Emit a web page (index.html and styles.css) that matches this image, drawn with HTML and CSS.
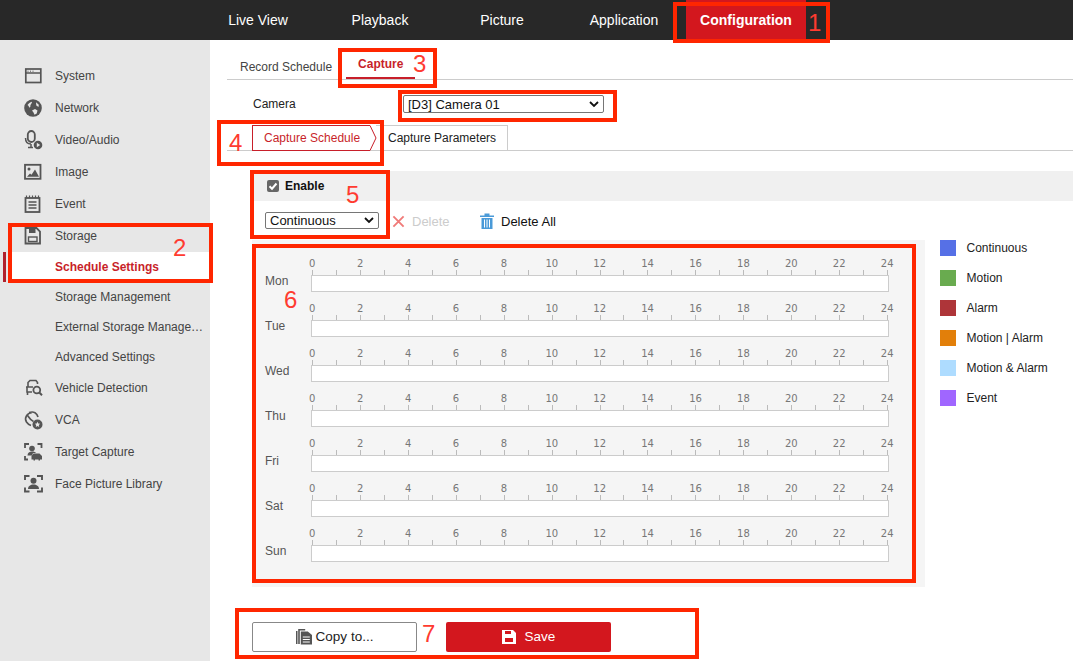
FILE: index.html
```html
<!DOCTYPE html>
<html lang="en">
<head>
    <meta charset="UTF-8">
    <title>Configuration - Storage</title>
    <link rel="stylesheet" href="styles.css">
</head>
<body>
    <header class="topbar">
        <a class="nav-item">Live View</a>
        <a class="nav-item">Playback</a>
        <a class="nav-item">Picture</a>
        <a class="nav-item">Application</a>
        <a class="nav-item active">Configuration</a>
    </header>

    <div class="page">
        <nav class="sidebar">
            <div class="side-item">
                <svg class="icon" viewBox="0 0 18 18"><rect x="1.800" y="2" width="15" height="13.500" stroke-width="1.700"/><path d="M1.500 6h15" stroke-width="1.500"/><path d="M3.500 4.200h1M6 4.200h1M8.500 4.200h1" stroke-width="1"/></svg>
                <span>System</span>
            </div>
            <div class="side-item">
                <svg class="icon" viewBox="0 0 18 18"><circle class="solid" cx="9" cy="9" r="8.800"/><path class="hole" d="M3.500 6c1-1.500 2.500-2.800 4.500-3.300 0 1.600-1 2.300-1.500 3.300-.5 1 .5 2-1 2.700-.5-1-1-2.100-2-2.700zM8 11.500l3-1.500 2.500 1.500-.8 3-2.200 1.300-1-2.300zM12 3.300l2.800 2.500-.3 2.200-2.200-1.500z"/></svg>
                <span>Network</span>
            </div>
            <div class="side-item">
                <svg class="icon" viewBox="0 0 18 18"><rect x="3.800" y="0" width="7" height="11" rx="3.500" stroke-width="1.800"/><path d="M1.500 7c0 4 2.500 6 5.500 6M7 13v3M4 16.500h5" stroke-width="1.500"/><circle class="solid" cx="14" cy="14" r="4.300"/><path class="hole" d="M12.800 11.800v4.400l3.400-2.200z"/></svg>
                <span>Video/Audio</span>
            </div>
            <div class="side-item">
                <svg class="icon" viewBox="0 0 18 18"><rect x="1" y="1.800" width="15.500" height="14" stroke-width="1.800"/><circle class="solid" cx="5" cy="6" r="1.500"/><path class="solid" d="M3 13.800l3-3.300 1.500 1.200L11 6.500l4 7.300z"/></svg>
                <span>Image</span>
            </div>
            <div class="side-item">
                <svg class="icon" viewBox="0 0 18 18"><rect x="1.500" y="3" width="14" height="14" stroke-width="1.800"/><path d="M2.500 .5v2.500M5.500 .5v2.500M8.500 .5v2.500M11.500 .5v2.500M14.500 .5v2.500" stroke-width="1.200"/><path d="M4.500 7h8M4.500 10h8M4.500 13h8" stroke-width="1.300"/></svg>
                <span>Event</span>
            </div>
            <div class="side-item">
                <svg class="icon" viewBox="0 0 18 18"><path d="M1.500 1h11l3.500 3.500V16.500H1.500z" stroke-width="1.800"/><path class="solid" d="M5 1h6.500v5H5z"/><rect x="4.500" y="10" width="8.500" height="4.500" stroke-width="1.400"/></svg>
                <span>Storage</span>
            </div>
            <div class="side-sub selected">Schedule Settings</div>
            <div class="side-sub">Storage Management</div>
            <div class="side-sub">External Storage Manage…</div>
            <div class="side-sub">Advanced Settings</div>
            <div class="side-item">
                <svg class="icon" viewBox="0 0 18 18"><path d="M4 8V3.500L6 1.500h6l1.500 2V5M2 8h7M3 8v5h5M3.500 13v3" stroke-width="1.600"/><circle cx="12.800" cy="11" r="3.400" stroke-width="1.800"/><path d="M15.300 13.500l2.700 2.700" stroke-width="2"/></svg>
                <span>Vehicle Detection</span>
            </div>
            <div class="side-item">
                <svg class="icon" viewBox="0 0 18 18"><path d="M8 1.500C3 2 0 7 2.500 11c1 1.500 2.500 2.800 4.500 3.500M5 1.500c5-1.500 8 .5 9 4.500M3.500 4.500c2 3 4 5 6 6" stroke-width="1.700"/><circle class="solid" cx="13.500" cy="13.500" r="5"/><path class="hole" d="M13.500 10.800l.8 1.800 1.900.2-1.400 1.300.4 1.900-1.700-1-1.700 1 .4-1.900-1.400-1.300 1.900-.2z"/></svg>
                <span>VCA</span>
            </div>
            <div class="side-item">
                <svg class="icon" viewBox="0 0 18 18"><path d="M1 5V1h4M13.500 1H17.500V5M1 13v3.500h3" stroke-width="1.800"/><circle class="solid" cx="8" cy="5.500" r="2.800"/><path class="solid" d="M3.500 12.500c0-2.500 2-4 4.500-4s3 .5 4 1.500H9l-1 2.500z"/><path class="solid" d="M7.500 16.500v-3.500L9.500 10.500h6L18 13v3.500h-2v1h-1.500v-1H11v1H9.500v-1z"/></svg>
                <span>Target Capture</span>
            </div>
            <div class="side-item">
                <svg class="icon" viewBox="0 0 18 18"><path d="M1 5V1h4.500M13 1h5V5M1 12.500V16.500h4.500M13 16.500h5V12.500" stroke-width="1.900"/><circle class="solid" cx="9.500" cy="5.800" r="3"/><path class="solid" d="M4 14c0-3 2.500-4.500 5.500-4.500S15 11 15 14z"/></svg>
                <span>Face Picture Library</span>
            </div>
        </nav>

        <main class="content">
            <div class="tabs">
                <a class="tab">Record Schedule</a>
                <a class="tab current">Capture</a>
            </div>

            <div class="camera-row">
                <label class="camera-label">Camera</label>
                <select class="select camera-select"><option>[D3] Camera 01</option></select>
            </div>

            <div class="subtabs">
                <a class="subtab current">Capture Schedule
                    <svg class="subtab-arrow" viewBox="0 0 8 26"><path d="M0 .5h1L7 13 1 25.500H0"/></svg>
                </a>
                <a class="subtab">Capture Parameters</a>
            </div>

            <div class="enable-band">
                <span class="checkbox">
                    <svg viewBox="0 0 12 12"><path d="M2.500 6.200l2.500 2.500 4.500-5.200"/></svg>
                </span>
                <b>Enable</b>
            </div>

            <div class="toolbar">
                <select class="select type-select"><option>Continuous</option></select>
                <a class="tool disabled">
                    <svg class="tool-x" viewBox="0 0 14 14"><path d="M1.500 1.500l11 11M12.500 1.500l-11 11"/></svg>
                    Delete
                </a>
                <a class="tool">
                    <svg class="tool-bin" viewBox="0 0 14 16"><path class="lid" d="M0 2.500h14v1.500H0zM4.500.5h5v2h-5z"/><path class="lid" d="M1.500 5h11v11h-11z"/><path class="slots" d="M4.500 6.500v8M7 6.500v8M9.500 6.500v8"/></svg>
                    Delete All
                </a>
            </div>

            <div class="schedule-wrap">
                <div class="schedule">
                    <div class="day">
                        <span class="day-name">Mon</span>
                        <div class="timeline">
                            <div class="hours"><span>0</span><span>2</span><span>4</span><span>6</span><span>8</span><span>10</span><span>12</span><span>14</span><span>16</span><span>18</span><span>20</span><span>22</span><span>24</span></div>
                            <div class="ticks"></div>
                            <div class="bar"></div>
                        </div>
                    </div>
                    <div class="day">
                        <span class="day-name">Tue</span>
                        <div class="timeline">
                            <div class="hours"><span>0</span><span>2</span><span>4</span><span>6</span><span>8</span><span>10</span><span>12</span><span>14</span><span>16</span><span>18</span><span>20</span><span>22</span><span>24</span></div>
                            <div class="ticks"></div>
                            <div class="bar"></div>
                        </div>
                    </div>
                    <div class="day">
                        <span class="day-name">Wed</span>
                        <div class="timeline">
                            <div class="hours"><span>0</span><span>2</span><span>4</span><span>6</span><span>8</span><span>10</span><span>12</span><span>14</span><span>16</span><span>18</span><span>20</span><span>22</span><span>24</span></div>
                            <div class="ticks"></div>
                            <div class="bar"></div>
                        </div>
                    </div>
                    <div class="day">
                        <span class="day-name">Thu</span>
                        <div class="timeline">
                            <div class="hours"><span>0</span><span>2</span><span>4</span><span>6</span><span>8</span><span>10</span><span>12</span><span>14</span><span>16</span><span>18</span><span>20</span><span>22</span><span>24</span></div>
                            <div class="ticks"></div>
                            <div class="bar"></div>
                        </div>
                    </div>
                    <div class="day">
                        <span class="day-name">Fri</span>
                        <div class="timeline">
                            <div class="hours"><span>0</span><span>2</span><span>4</span><span>6</span><span>8</span><span>10</span><span>12</span><span>14</span><span>16</span><span>18</span><span>20</span><span>22</span><span>24</span></div>
                            <div class="ticks"></div>
                            <div class="bar"></div>
                        </div>
                    </div>
                    <div class="day">
                        <span class="day-name">Sat</span>
                        <div class="timeline">
                            <div class="hours"><span>0</span><span>2</span><span>4</span><span>6</span><span>8</span><span>10</span><span>12</span><span>14</span><span>16</span><span>18</span><span>20</span><span>22</span><span>24</span></div>
                            <div class="ticks"></div>
                            <div class="bar"></div>
                        </div>
                    </div>
                    <div class="day">
                        <span class="day-name">Sun</span>
                        <div class="timeline">
                            <div class="hours"><span>0</span><span>2</span><span>4</span><span>6</span><span>8</span><span>10</span><span>12</span><span>14</span><span>16</span><span>18</span><span>20</span><span>22</span><span>24</span></div>
                            <div class="ticks"></div>
                            <div class="bar"></div>
                        </div>
                    </div>
                </div>

                <ul class="legend">
                    <li><i class="swatch continuous"></i>Continuous</li>
                    <li><i class="swatch motion"></i>Motion</li>
                    <li><i class="swatch alarm"></i>Alarm</li>
                    <li><i class="swatch motion-or"></i>Motion | Alarm</li>
                    <li><i class="swatch motion-and"></i>Motion &amp; Alarm</li>
                    <li><i class="swatch event"></i>Event</li>
                </ul>
            </div>

            <div class="actions">
                <button class="btn copy">
                    <svg class="btn-icon" viewBox="0 0 16 16"><path class="copy-back" d="M0 2h1.500v13H0zM2.200 1h1.600v14H2.200zM2.200 0h7v1.500h-7z"/><path class="copy-back" d="M4.800 2.500h7l4.200 3.500v9.500H4.800z"/><path class="copy-lines" d="M6.800 8h7M6.800 10.500h7M6.800 13h7"/></svg>
                    Copy to...
                </button>
                <button class="btn save">
                    <svg class="btn-icon" viewBox="0 0 14 14"><path class="save-body" d="M0 0h11l3 3v11H0z"/><path class="save-hole" d="M3 1h6v3H3zM3 8h8v4H3z"/></svg>
                    Save
                </button>
            </div>
        </main>
    </div>

    <!-- red review marks drawn over the screenshot -->
    <div class="mark mark-config"></div><span class="mark-num num-1">1</span>
    <div class="mark mark-storage"></div><span class="mark-num num-2">2</span>
    <div class="mark mark-capture"></div><span class="mark-num num-3">3</span>
    <div class="mark mark-camera"></div>
    <div class="mark mark-subtab"></div><span class="mark-num num-4">4</span>
    <div class="mark mark-enable"></div><span class="mark-num num-5">5</span>
    <div class="mark mark-grid"></div><span class="mark-num num-6">6</span>
    <div class="mark mark-actions"></div><span class="mark-num num-7">7</span>
</body>
</html>
```

FILE: styles.css
```css
* {
    margin: 0;
    padding: 0;
    box-sizing: border-box;
}

body {
    position: relative;
    height: 661px;
    overflow: hidden;
    background: #fff;
    font-family: "Liberation Sans", Arial, sans-serif;
    font-size: 12px;
    color: #222;
}

/* top navigation */
.topbar {
    display: flex;
    gap: 2px;
    height: 40px;
    padding-left: 198px;
    background: #282828;
}

.nav-item {
    width: 120px;
    line-height: 40px;
    text-align: center;
    font-size: 14px;
    color: #fff;
}

.nav-item.active {
    background: #d3171e;
    font-weight: bold;
}

.page {
    display: flex;
    height: 621px;
}

/* left menu */
.sidebar {
    flex: 0 0 210px;
    padding-top: 20px;
    background: #e7e7e7;
    color: #444;
}

.side-item {
    display: flex;
    align-items: center;
    height: 32px;
    padding-left: 24px;
    gap: 13px;
}

.icon {
    flex: 0 0 18px;
    width: 18px;
    height: 18px;
    overflow: visible;
    fill: none;
    stroke: #555;
    stroke-width: 1.6;
}

.icon .solid {
    fill: #555;
    stroke: none;
}

.icon .hole {
    fill: #e7e7e7;
    stroke: none;
}

.side-sub {
    height: 30px;
    padding-left: 55px;
    line-height: 30px;
}

.side-sub.selected {
    position: relative;
    margin-left: 10px;
    padding-left: 45px;
    background: #fff;
    color: #c81f2a;
    font-weight: bold;
}

.side-sub.selected::before {
    content: '';
    position: absolute;
    left: -7px;
    top: 0;
    width: 3px;
    height: 30px;
    background: #b0202c;
}

/* main area */
.content {
    flex: 1;
    padding-left: 17px;
}

.tabs {
    display: flex;
    align-items: flex-end;
    height: 40px;
    border-bottom: 1px solid #ccc;
}

.tab {
    padding: 0 9px 5px 13px;
    line-height: 14px;
    color: #444;
}

.tab.current {
    width: 69px;
    margin-left: 5px;
    padding: 0 0 6px 12px;
    border-bottom: 2px solid #c81f2a;
    color: #c81f2a;
    font-weight: bold;
}

.camera-row {
    display: flex;
    align-items: center;
    height: 18px;
    margin: 15px 0 12px 26px;
}

.camera-label {
    width: 150px;
}

.select {
    height: 18px;
    padding-left: 4px;
    border: 1px solid #767676;
    border-radius: 2px;
    background: #fff url("data:image/svg+xml,%3Csvg xmlns='http://www.w3.org/2000/svg' width='10' height='7'%3E%3Cpath d='M1 1l4 4 4-4' fill='none' stroke='%23111' stroke-width='1.800'/%3E%3C/svg%3E") no-repeat right 4px center;
    appearance: none;
    font-family: "Liberation Sans", Arial, sans-serif;
    font-size: 13px;
    color: #111;
}

.camera-select {
    width: 201px;
}

.subtabs {
    display: flex;
    height: 26px;
    padding-left: 25px;
    border-bottom: 1px solid #ccc;
}

.subtab {
    position: relative;
    height: 26px;
    padding: 0 11px 0 12px;
    border: 1px solid #ccc;
    border-left: none;
    line-height: 24px;
}

.subtab.current {
    width: 117px;
    height: 26px;
    padding: 0 0 0 11px;
    border: 1px solid #c81f2a;
    border-right: none;
    margin-right: 7px;
    background: #fff;
    color: #c81f2a;
}

.subtab-arrow {
    position: absolute;
    left: 116px;
    top: -1px;
    width: 8px;
    height: 26px;
    fill: #fff;
    stroke: #c81f2a;
    stroke-width: 1;
}

.enable-band {
    display: flex;
    align-items: center;
    gap: 6px;
    height: 30px;
    margin: 20px 0 0 25px;
    padding-left: 15px;
    background: #f0f0f0;
    color: #111;
}

.checkbox {
    width: 12px;
    height: 12px;
    border-radius: 2px;
    background: #666;
}

.checkbox svg {
    display: block;
    fill: none;
    stroke: #fff;
    stroke-width: 2;
}

.toolbar {
    display: flex;
    align-items: center;
    height: 18px;
    margin: 11px 0 10px 38px;
}

.type-select {
    align-self: flex-start;
    width: 114px;
    height: 17px;
}

.tool {
    display: flex;
    align-items: center;
    gap: 7px;
    margin-left: 13px;
    width: 88px;
    font-size: 13px;
    color: #111;
}

.tool.disabled {
    width: 75px;
    color: #ccc;
}

.tool-x {
    width: 13px;
    height: 13px;
    fill: none;
    stroke: #f07a78;
    stroke-width: 2;
}

.tool-bin {
    width: 14px;
    height: 16px;
}

.tool-bin .lid {
    fill: #4a9ad8;
}

.tool-bin .slots {
    fill: none;
    stroke: #fff;
    stroke-width: 1;
}

/* weekly schedule */
.schedule-wrap {
    display: flex;
    margin-left: 25px;
}

.schedule {
    flex: 0 0 673px;
    height: 347px;
    padding: 15px 0 0 13px;
    background: #f5f5f5;
}

.day {
    display: flex;
    height: 45px;
}

.day-name {
    flex: 0 0 46px;
    margin-top: 18px;
    line-height: 16px;
    color: #555;
}

.timeline {
    width: 578px;
}

.hours {
    display: flex;
    height: 15px;
    margin-left: -22.7px;
    font-family: "DejaVu Sans", sans-serif;
    font-size: 10px;
    line-height: 17px;
    color: #777;
}

.hours span {
    flex: 0 0 47.92px;
    text-align: center;
}

.ticks {
    width: 578px;
    height: 5px;
    margin-left: 1px;
    background: repeating-linear-gradient(to right, #bbb 0, #bbb 1px, transparent 1px, transparent 23.96px);
}

.bar {
    height: 17px;
    border: 1px solid #ccc;
    background: #fff;
}

.legend {
    margin-left: 15px;
    list-style: none;
    color: #222;
}

.legend li {
    display: flex;
    align-items: center;
    gap: 10.5px;
    height: 16px;
    margin-bottom: 14px;
}

.swatch {
    width: 16px;
    height: 16px;
}

.continuous { background: #5670e6; }
.motion { background: #69ab4f; }
.alarm { background: #ae3539; }
.motion-or { background: #e27f0a; }
.motion-and { background: #aedcff; }
.event { background: #a066ff; }

/* bottom buttons */
.actions {
    display: flex;
    gap: 29px;
    margin: 35px 0 0 25px;
}

.btn {
    display: flex;
    align-items: center;
    justify-content: center;
    width: 165px;
    height: 30px;
    padding-bottom: 1px;
    border-radius: 2px;
    font-family: "Liberation Sans", Arial, sans-serif;
    font-size: 13.5px;
}

.btn-icon {
    width: 16px;
    height: 16px;
}

.copy {
    gap: 4px;
    border: 1px solid #888;
    background: #fff;
    color: #222;
}

.copy-back {
    fill: #555;
}

.copy-lines {
    fill: none;
    stroke: #fff;
    stroke-width: 1;
}

.save {
    gap: 9px;
    border: none;
    background: #d3171e;
    color: #fff;
}

.save .btn-icon {
    width: 14px;
    height: 14px;
}

.save-body {
    fill: #fff;
}

.save-hole {
    fill: #d3171e;
}

/* review marks */
.mark {
    position: absolute;
    border: 4px solid #ff2600;
}

.mark-config { left: 673px; top: 2px; width: 157px; height: 41px; }
.mark-storage { left: 8px; top: 223px; width: 205px; height: 60px; }
.mark-capture { left: 338px; top: 48px; width: 99px; height: 40px; }
.mark-camera { left: 398px; top: 90px; width: 219px; height: 32px; }
.mark-subtab { left: 217px; top: 120px; width: 167px; height: 46px; }
.mark-enable { left: 250px; top: 170px; width: 140px; height: 69px; }
.mark-grid { left: 252px; top: 244px; width: 664px; height: 339px; }
.mark-actions { left: 235px; top: 608px; width: 464px; height: 51px; }

.mark-num {
    position: absolute;
    font-size: 24px;
    line-height: 28px;
    color: #ff3b30;
}

.num-1 { left: 808px; top: 9px; }
.num-2 { left: 173px; top: 234px; }
.num-3 { left: 413px; top: 50px; }
.num-4 { left: 229px; top: 129px; }
.num-5 { left: 346px; top: 181px; }
.num-6 { left: 284px; top: 286px; }
.num-7 { left: 422px; top: 620px; }
```
